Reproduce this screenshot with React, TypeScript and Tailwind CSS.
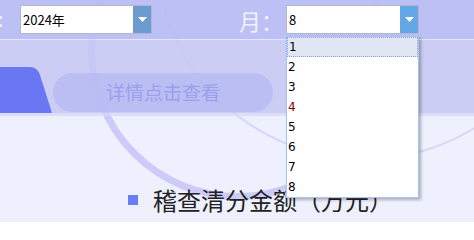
import { useState } from 'react'

const MONTHS = ['1', '2', '3', '4', '5', '6', '7', '8']

function SelectBox({ value, width, btnClass }: { value: string; width: string; btnClass: string }) {
  return (
    <div className={`flex h-[29px] ${width} border border-[#b4b7c9] bg-white`}>
      <span className="flex flex-1 items-center pl-[2px] text-[13px] text-black">{value}</span>
      <span className={`flex w-[18px] items-center justify-center ${btnClass}`}>
        <svg width="9" height="5" viewBox="0 0 9 5">
          <path d="M0 0H9L4.5 5Z" fill="#fff" />
        </svg>
      </span>
    </div>
  )
}

export default function App() {
  const [month] = useState('8')

  return (
    <div className="relative h-[222px] w-[474px] overflow-hidden bg-[#eef0fd] font-['Noto_Sans_CJK_SC',sans-serif]">
      {/* decorative rings */}
      <div className="pointer-events-none absolute left-[88px] top-[-100px] h-[300px] w-[300px] rounded-full border-[7px] border-[#a9a6f2]/50" />
      <div className="pointer-events-none absolute left-[155px] top-[-260px] h-[420px] w-[420px] rounded-full border-[2px] border-[#a5aaf0]/35" />

      {/* top bar */}
      <div className="relative flex h-[39px] items-center bg-[#b9bdf3]/95">
        <span className="ml-[-3px] w-[23px] font-['Liberation_Sans',sans-serif] text-[20px] font-bold leading-none text-[#f2f3ff]">:</span>
        <SelectBox value="2024年" width="w-[132px]" btnClass="bg-[#6b9bcf]" />
        <span className="ml-[87px] w-[47px] text-[22px] leading-none text-[#f2f3ff]">月：</span>
        <SelectBox value={month} width="w-[133px]" btnClass="bg-[#63a7e6]" />
      </div>
      <div className="relative h-px bg-[#dfe1fb]/70" />

      {/* tab band */}
      <div className="relative flex h-[73px] items-end bg-[#c6c9f4]/90">
        <svg width="52" height="46" viewBox="0 0 52 46" className="shrink-0">
          <path d="M0 0H30Q37 0 40 8L52 46H0Z" fill="#6a77f2" />
        </svg>
        <div className="mb-[1px] ml-[1px] flex h-[39px] w-[220px] items-center justify-center rounded-full bg-[#b6baf3]/80 text-[19px] text-[#9aa0ed]">
          详情点击查看
        </div>
      </div>
      <div className="relative h-[3px] bg-[#d4d6f7]/70" />

      {/* content */}
      <div className="relative flex items-center pl-[128px] pt-[72px]">
        <span className="h-[10px] w-[10px] bg-[#6a7cf6]" />
        <span className="ml-[15px] text-[24px] leading-none text-[#222]">稽查清分金额（万元）</span>
      </div>

      {/* open month dropdown */}
      <div className="absolute left-[286px] top-[36px] w-[133px] border border-[#a5c3ee] bg-white shadow-[2px_2px_3px_rgba(0,0,0,0.28)]">
        {MONTHS.map((m) => (
          <div
            key={m}
            className={`flex h-[20px] items-center pl-[1px] font-['DejaVu_Sans',sans-serif] text-[12px] ${
              m === '1' ? 'border border-dotted border-[#8da1d6] bg-[#e0e6f4]' : ''
            } ${m === '4' ? 'text-[#7a0000]' : 'text-black'}`}
          >
            {m}
          </div>
        ))}
      </div>
    </div>
  )
}
